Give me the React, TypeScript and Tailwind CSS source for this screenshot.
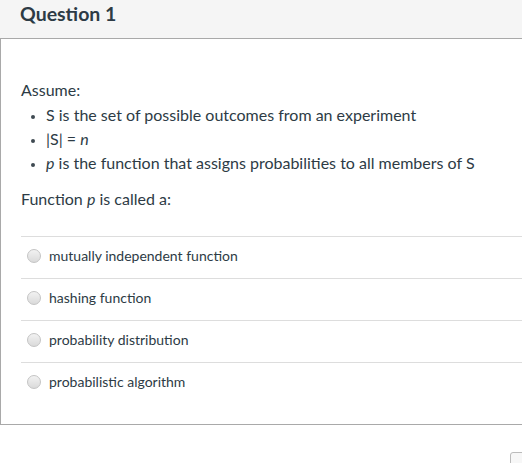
import React from 'react';

const answers = [
  'mutually independent function',
  'hashing function',
  'probability distribution',
  'probabilistic algorithm',
];

const App: React.FC = () => {
  return (
    <div className="relative w-[522px] h-[463px] bg-white font-['Lato','Noto_Sans',sans-serif] text-[#2d3b45] overflow-hidden">
      <div className="h-[39px] bg-[#f5f5f5] border-b border-[#a9a9a9] px-5 pt-[1px]">
        <h2 className="text-[19.5px] leading-[26px] font-bold">Question 1</h2>
      </div>

      <div className="h-[386px] border-l border-b border-[#a9a9a9] pl-5 pt-[39px]">
        <p className="text-base leading-6">Assume:</p>
        <ul className="mt-[1px] text-base leading-6">
          {[
            <>S is the set of possible outcomes from an experiment</>,
            <>
              |S| = <i>n</i>
            </>,
            <>
              <i>p</i> is the function that assigns probabilities to all members of S
            </>,
          ].map((item, i) => (
            <li key={i} className="flex items-center">
              <span className="ml-[10px] mr-[11px] mt-[3px] w-[4px] h-[4px] rounded-full bg-[#3f4a52]" />
              <span>{item}</span>
            </li>
          ))}
        </ul>
        <p className="mt-3 text-base leading-6">
          Function <i>p</i> is called a:
        </p>

        <div className="mt-[25px]">
          {answers.map((a) => (
            <div key={a} className="h-[42px] border-t border-[#dddddd] flex items-center pl-[6px] pb-[4px]">
              <span className="w-[14px] h-[14px] rounded-full border border-[#c4c4c4] bg-gradient-to-b from-[#f2f2f2] to-[#dadada]" />
              <span className="ml-[8px] text-sm">{a}</span>
            </div>
          ))}
        </div>
      </div>

      <div className="absolute left-[510px] top-[452px] w-[20px] h-[20px] border border-[#bbbbbb] rounded-tl-[3px] bg-[#f7f7f7]" />
    </div>
  );
};

export default App;
